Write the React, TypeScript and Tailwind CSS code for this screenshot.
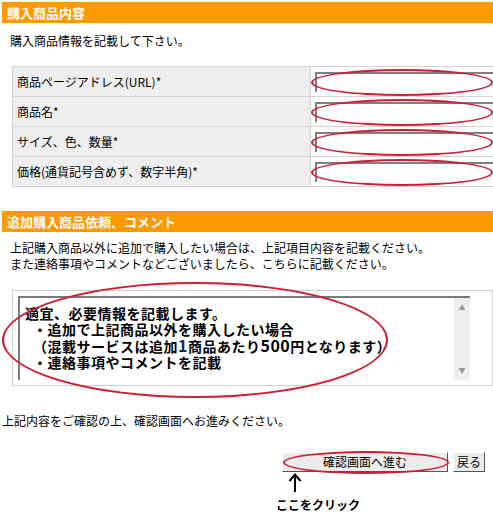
const font = "font-['Noto_Sans_CJK_JP','Noto_Sans',sans-serif]"

function SectionBar({ title }: { title: string }) {
  return (
    <div className="ml-[2px] flex h-[21px] items-center bg-[#ff9900] pl-[5px] text-[13px] font-bold leading-none text-white">
      {title}
    </div>
  )
}

function Ring({ className }: { className: string }) {
  return <div className={`pointer-events-none absolute rounded-[50%] border-2 border-[#cc1f36] ${className}`} />
}

const rows = [
  "商品ページアドレス(URL)*",
  "商品名*",
  "サイズ、色、数量*",
  "価格(通貨記号含めず、数字半角)*",
]

export default function App() {
  return (
    <div className={`relative w-[493px] h-[527px] overflow-hidden bg-white text-[12px] text-black ${font}`}>
      <div className="pt-[2px]">
        <SectionBar title="購入商品内容" />
      </div>
      <p className="ml-[10px] mt-[10px] leading-[16px]">購入商品情報を記載して下さい。</p>

      <div className="ml-[12px] mt-[17px] border-t border-l border-[#d4d4d4]">
        {rows.map((label) => (
          <div key={label} className="flex h-[30px] border-b border-[#d4d4d4]">
            <div className="flex w-[298px] items-center border-r border-[#d4d4d4] bg-[#eeeeee] pl-[4px] text-[12px]">
              {label}
            </div>
            <div className="relative flex flex-1 items-center pl-[4px]">
              <div className="h-[20px] w-full border-t-2 border-l-2 border-[#808080] bg-white" />
              <Ring className="left-[0px] top-[2px] h-[27px] w-[182px]" />
            </div>
          </div>
        ))}
      </div>

      <div className="mt-[24px]">
        <SectionBar title="追加購入商品依頼、コメント" />
      </div>
      <p className="ml-[10px] mt-[8px] leading-[16px]">
        上記購入商品以外に追加で購入したい場合は、上記項目内容を記載ください。
        <br />
        また連絡事項やコメントなどございましたら、こちらに記載ください。
      </p>

      <div className="ml-[12px] mt-[18px] h-[96px] border border-[#d0d0d0] p-[5px]">
        <div className="flex h-full w-[452px] border-t-2 border-l-2 border-[#7a7a7a] bg-white">
          <div className="flex-1 whitespace-nowrap pl-[5px] pt-[7px] text-[14px] font-bold leading-[16px] tracking-[0.5px]">
            <div>適宜、必要情報を記載します。</div>
            <div className="pl-[8px]">・追加で上記商品以外を購入したい場合</div>
            <div className="pl-[8px]">
              （混載サービスは追加<span className="text-[16px] text-[#1a2a4a]">1</span>商品あたり
              <span className="text-[16px]">500</span>円となります）
            </div>
            <div className="pl-[8px]">・連絡事項やコメントを記載</div>
          </div>
          <div className="flex w-[16px] flex-col items-center justify-between bg-[#eeeeee] py-[6px] text-[7px] leading-none tracking-normal text-[#999]">
            <span>▲</span>
            <span>▼</span>
          </div>
        </div>
      </div>

      <p className="ml-[2px] mt-[27px] leading-[16px]">上記内容をご確認の上、確認画面へお進みください。</p>

      <div className="mt-[23px] flex justify-end gap-[5px] pr-[8px]">
        <button className="h-[20px] w-[166px] border border-t-white border-l-white border-r-[#555] border-b-[#555] bg-[#ececec] text-[12px] leading-none">
          確認画面へ進む
        </button>
        <button className="h-[20px] w-[32px] border border-t-white border-l-white border-r-[#555] border-b-[#555] bg-[#ececec] text-[12px] leading-none">
          戻る
        </button>
      </div>
      <svg className="ml-[288px] mt-[1px] block" width="14" height="19" viewBox="0 0 14 19">
        <path d="M7 1.5 L7 19 M1.5 8 L7 1.5 L12.5 8" fill="none" stroke="#000" strokeWidth="2" />
      </svg>
      <div className="ml-[276px] mt-[5px] text-[12px] font-bold leading-[16px]">ここをクリック</div>

      <Ring className="left-[2px] top-[282px] h-[116px] w-[386px]" />
      <Ring className="left-[283px] top-[451px] h-[23px] w-[166px]" />
    </div>
  )
}
